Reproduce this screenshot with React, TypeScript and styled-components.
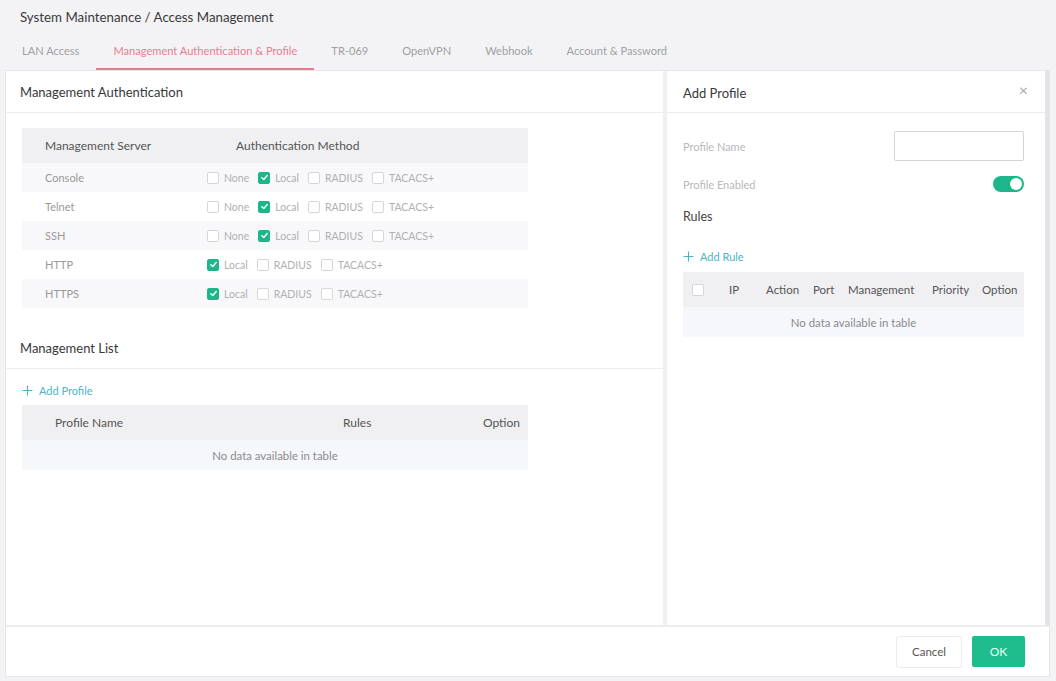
import React from "react";
import styled, { createGlobalStyle } from "styled-components";

const GlobalStyle = createGlobalStyle`
  html, body {
    margin: 0;
    padding: 0;
    background: #f3f3f6;
    font-family: "Lato", "Open Sans", sans-serif;
    color: #333;
  }
  * { box-sizing: border-box; }
`;

type Method = { label: string; checked: boolean };
type ServerRow = { name: string; methods: Method[] };

const full = (): Method[] => [
  { label: "None", checked: false },
  { label: "Local", checked: true },
  { label: "RADIUS", checked: false },
  { label: "TACACS+", checked: false },
];
const web = (): Method[] => [
  { label: "Local", checked: true },
  { label: "RADIUS", checked: false },
  { label: "TACACS+", checked: false },
];

const servers: ServerRow[] = [
  { name: "Console", methods: full() },
  { name: "Telnet", methods: full() },
  { name: "SSH", methods: full() },
  { name: "HTTP", methods: web() },
  { name: "HTTPS", methods: web() },
];

const tabs = [
  "LAN Access",
  "Management Authentication & Profile",
  "TR-069",
  "OpenVPN",
  "Webhook",
  "Account & Password",
];

const Checkbox = ({ checked }: { checked?: boolean }) => (
  <Box $checked={checked}>
    {checked && (
      <svg width="9" height="9" viewBox="0 0 10 10">
        <path d="M2 5.2 L4.2 7.3 L8 2.8" stroke="#fff" strokeWidth="1.6" fill="none" strokeLinecap="round" strokeLinejoin="round" />
      </svg>
    )}
  </Box>
);

const PlusIcon = () => (
  <svg width="11" height="11" viewBox="0 0 11 11">
    <path d="M5.5 0.5 V10.5 M0.5 5.5 H10.5" stroke="currentColor" strokeWidth="1.1" />
  </svg>
);

const App = () => {
  return (
    <Page>
      <GlobalStyle />
      <Breadcrumb>System Maintenance / Access Management</Breadcrumb>
      <Tabs>
        {tabs.map((t, i) => (
          <Tab key={t} $active={i === 1}>
            {t}
          </Tab>
        ))}
      </Tabs>
      <Card>
        <Body>
          <LeftPanel>
            <SectionTitle>Management Authentication</SectionTitle>
            <SectionBody>
              <Table>
                <AuthHeader>
                  <span>Management Server</span>
                  <HeaderMethod>Authentication Method</HeaderMethod>
                </AuthHeader>
                {servers.map((s, i) => (
                  <AuthRow key={s.name} $striped={i % 2 === 0}>
                    <span>{s.name}</span>
                    <Methods>
                      {s.methods.map((m) => (
                        <MethodItem key={m.label}>
                          <Checkbox checked={m.checked} />
                          {m.label}
                        </MethodItem>
                      ))}
                    </Methods>
                  </AuthRow>
                ))}
              </Table>
            </SectionBody>
            <SectionTitle $top>Management List</SectionTitle>
            <SectionBody $compact>
              <AddLink>
                <PlusIcon /> Add Profile
              </AddLink>
              <Table>
                <ListHeader>
                  <span>Profile Name</span>
                  <span>Rules</span>
                  <OptionHead>Option</OptionHead>
                </ListHeader>
                <EmptyRow>No data available in table</EmptyRow>
              </Table>
            </SectionBody>
          </LeftPanel>
          <Drawer>
            <DrawerTitle>
              Add Profile
              <Close>×</Close>
            </DrawerTitle>
            <DrawerBody>
              <FieldRow>
                <FieldLabel>Profile Name</FieldLabel>
                <Input />
              </FieldRow>
              <FieldRow $short>
                <FieldLabel>Profile Enabled</FieldLabel>
                <Toggle>
                  <Knob />
                </Toggle>
              </FieldRow>
              <RulesTitle>Rules</RulesTitle>
              <AddLink $drawer>
                <PlusIcon /> Add Rule
              </AddLink>
              <Table>
                <RuleHeader>
                  <Checkbox />
                  <span>IP</span>
                  <span>Action</span>
                  <span>Port</span>
                  <span>Management</span>
                  <span>Priority</span>
                  <span>Option</span>
                </RuleHeader>
                <EmptyRow>No data available in table</EmptyRow>
              </Table>
            </DrawerBody>
          </Drawer>
        </Body>
        <Footer>
          <CancelButton>Cancel</CancelButton>
          <OkButton>OK</OkButton>
        </Footer>
      </Card>
    </Page>
  );
};

const Page = styled.div`
  width: 1056px;
  height: 681px;
  padding: 9px 6px 4px 5px;
  display: flex;
  flex-direction: column;
`;

const Breadcrumb = styled.div`
  font-size: 13.3px;
  color: #3a3a3a;
  padding-left: 15px;
  height: 20px;
`;

const Tabs = styled.div`
  display: flex;
  margin-top: 14px;
  height: 27px;
`;

const Tab = styled.div<{ $active?: boolean }>`
  font-size: 11.1px;
  color: ${(p) => (p.$active ? "#e97c91" : "#a0a0a4")};
  padding: 0 17px;
  border-bottom: 2px solid ${(p) => (p.$active ? "#e5798e" : "transparent")};
  height: 27px;
  line-height: 16px;
  white-space: nowrap;
`;

const Card = styled.div`
  flex: 1;
  background: #fff;
  border: 1px solid #e6e6ea;
  display: flex;
  flex-direction: column;
`;

const Body = styled.div`
  flex: 1;
  display: flex;
  border-bottom: 2px solid #ececef;
`;

const LeftPanel = styled.div`
  width: 661px;
  border-right: 4px solid #f0f0f2;
`;

const SectionTitle = styled.div<{ $top?: boolean }>`
  font-size: 13px;
  color: #383838;
  height: ${(p) => (p.$top ? "61px" : "42px")};
  padding: ${(p) => (p.$top ? "32px 14px 0" : "13px 14px 0")};
  border-bottom: 1px solid #ececef;
`;

const SectionBody = styled.div<{ $compact?: boolean }>`
  padding: ${(p) => (p.$compact ? "9px 135px 0 16px" : "15px 135px 0 16px")};
`;

const Table = styled.div`
  display: flex;
  flex-direction: column;
  color: #999;
`;

const AuthHeader = styled.div`
  display: grid;
  grid-template-columns: 185px 1fr;
  align-items: center;
  height: 35px;
  background: #f0f0f3;
  padding-left: 23px;
  font-size: 12px;
  color: #555;
`;

const HeaderMethod = styled.span`
  padding-left: 6px;
`;

const AuthRow = styled.div<{ $striped?: boolean }>`
  display: grid;
  grid-template-columns: 185px 1fr;
  align-items: center;
  height: 29px;
  padding-left: 23px;
  background: ${(p) => (p.$striped ? "#f8f8fa" : "#fff")};
  font-size: 11px;
  color: #999;
`;

const Methods = styled.div`
  display: flex;
  align-items: center;
  margin-left: -23px;
  font-size: 10.5px;
  color: #b0b0b4;
`;

const MethodItem = styled.span`
  display: flex;
  align-items: center;
  gap: 5px;
  margin-right: 9px;
`;

const Box = styled.span<{ $checked?: boolean }>`
  width: 12px;
  height: 12px;
  border-radius: 2px;
  border: 1px solid ${(p) => (p.$checked ? "#1cb68a" : "#d6d6da")};
  background: ${(p) => (p.$checked ? "#1cb68a" : "#fff")};
  display: inline-flex;
  align-items: center;
  justify-content: center;
  flex-shrink: 0;
`;

const AddLink = styled.div<{ $drawer?: boolean }>`
  display: flex;
  align-items: center;
  gap: 6px;
  font-size: 11px;
  color: #4bb5c6;
  height: 24px;
  margin-bottom: ${(p) => (p.$drawer ? "4px" : "3px")};
`;

const ListHeader = styled.div`
  display: grid;
  grid-template-columns: 1fr 117px 60px;
  align-items: center;
  height: 35px;
  background: #f0f0f3;
  padding: 0 8px 0 33px;
  font-size: 12px;
  color: #555;
`;

const OptionHead = styled.span`
  text-align: right;
`;

const EmptyRow = styled.div`
  height: 30px;
  display: flex;
  align-items: center;
  justify-content: center;
  background: #f6f7fb;
  font-size: 11.4px;
  color: #8a8a8e;
`;

const Drawer = styled.div`
  flex: 1;
  border-right: 4px solid #e3e3e6;
  display: flex;
  flex-direction: column;
`;

const DrawerTitle = styled.div`
  height: 42px;
  padding: 14px 17px 0 16px;
  font-size: 13px;
  color: #383838;
  border-bottom: 1px solid #ececef;
  display: flex;
  justify-content: space-between;
`;

const Close = styled.span`
  font-size: 16px;
  color: #aaa;
  line-height: 10px;
`;

const DrawerBody = styled.div`
  padding: 18px 21px 0 16px;
  display: flex;
  flex-direction: column;
`;

const FieldRow = styled.div<{ $short?: boolean }>`
  display: flex;
  align-items: center;
  justify-content: space-between;
  height: ${(p) => (p.$short ? "22px" : "30px")};
  margin-bottom: ${(p) => (p.$short ? "14px" : "12px")};
`;

const FieldLabel = styled.span`
  font-size: 11px;
  color: #b8b8bc;
`;

const Input = styled.div`
  width: 130px;
  height: 30px;
  border: 1px solid #d4d4d8;
  border-radius: 2px;
  background: #fff;
`;

const Toggle = styled.span`
  width: 31px;
  height: 16px;
  border-radius: 8px;
  background: #1cb68a;
  position: relative;
`;

const Knob = styled.span`
  position: absolute;
  right: 2px;
  top: 2px;
  width: 12px;
  height: 12px;
  border-radius: 50%;
  background: #fff;
`;

const RulesTitle = styled.div`
  font-size: 12.5px;
  color: #444;
  height: 35px;
`;

const RuleHeader = styled.div`
  display: grid;
  grid-template-columns: 37px 37px 47px 35px 84px 50px 1fr;
  align-items: center;
  height: 35px;
  background: #f0f0f3;
  padding-left: 9px;
  font-size: 11.5px;
  color: #555;
  white-space: nowrap;
`;

const Footer = styled.div`
  height: 49px;
  display: flex;
  align-items: center;
  justify-content: flex-end;
  gap: 10px;
  padding-right: 24px;
`;

const CancelButton = styled.button`
  width: 66px;
  height: 32px;
  border: 1px solid #ececef;
  background: #fff;
  border-radius: 2px;
  font-family: inherit;
  font-size: 11.5px;
  color: #555;
`;

const OkButton = styled.button`
  width: 53px;
  height: 31px;
  border: none;
  background: #1fbd8e;
  border-radius: 2px;
  font-family: inherit;
  font-size: 12px;
  color: #e5fff5;
`;

export default App;
